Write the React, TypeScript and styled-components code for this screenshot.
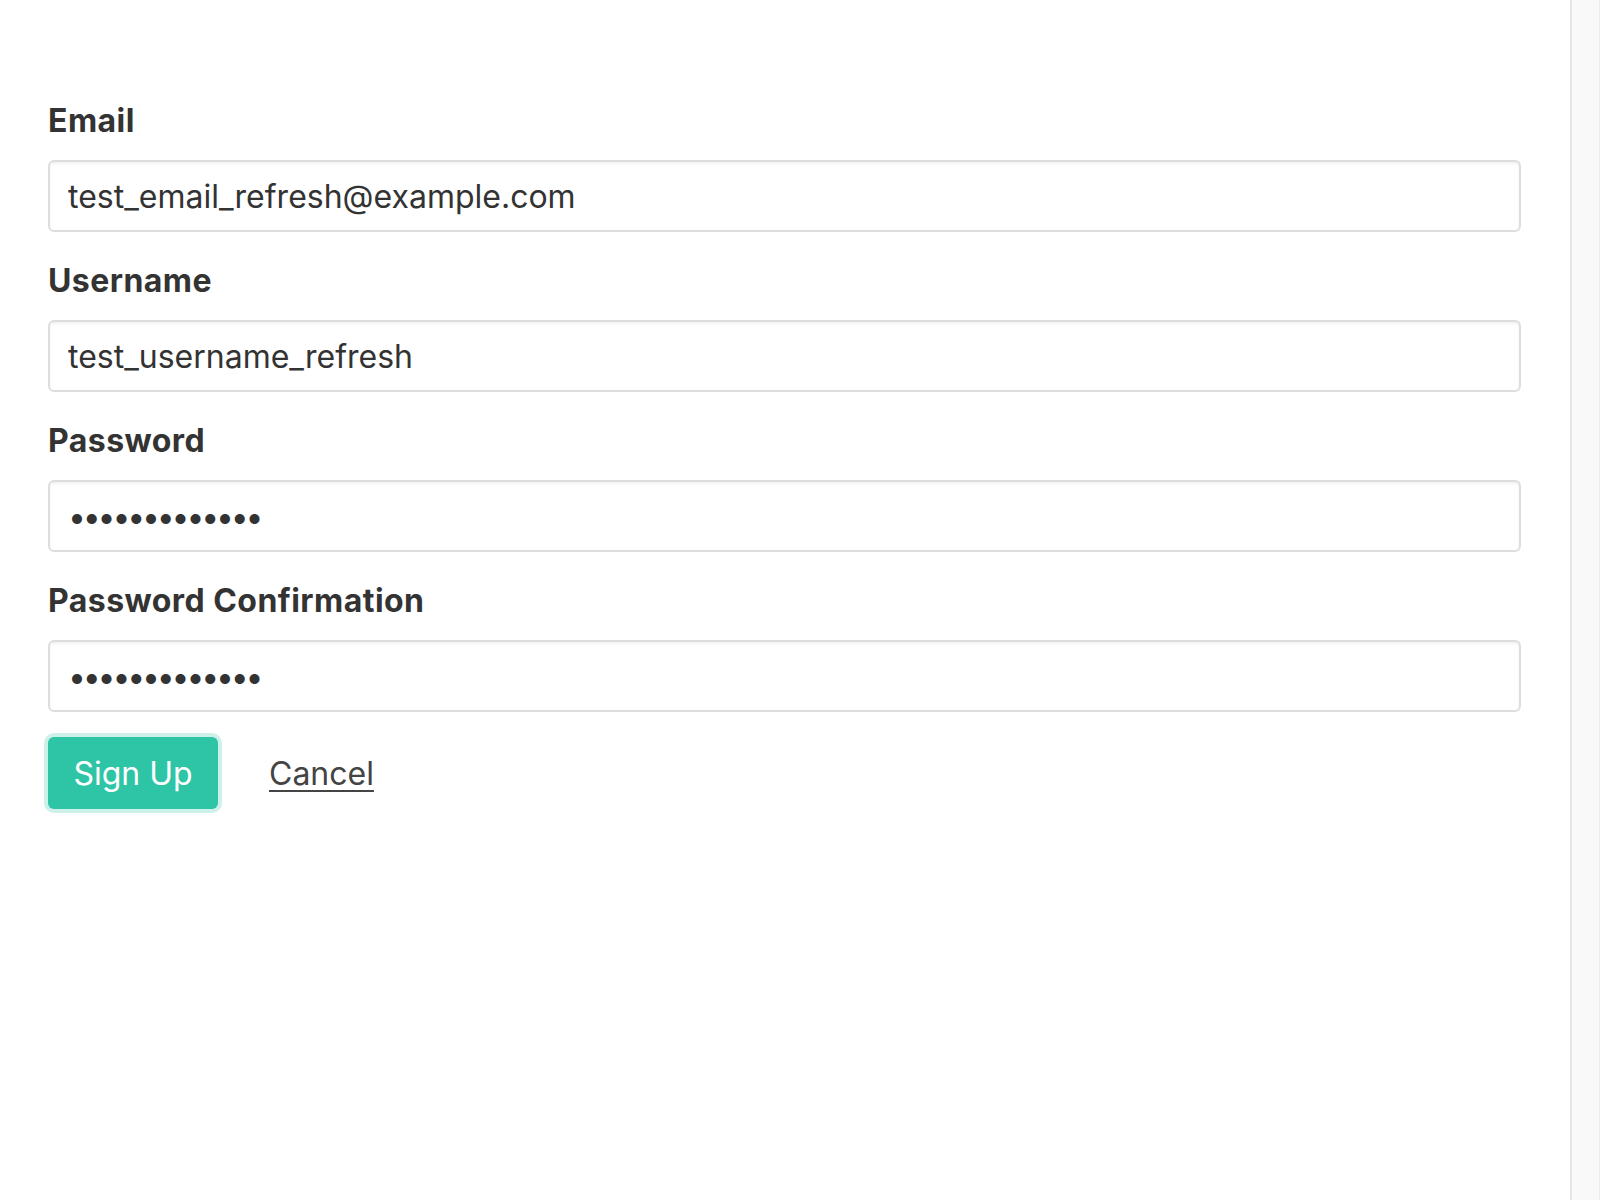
import React from "react";
import styled, { createGlobalStyle } from "styled-components";

const Global = createGlobalStyle`
  html, body { margin: 0; padding: 0; background: #fff; }
  body { font-family: Inter, "Helvetica Neue", Arial, sans-serif; color: #333; }
  * { box-sizing: border-box; }
`;

const Page = styled.div`
  display: flex;
  width: 1600px;
  height: 1200px;
  overflow: hidden;
`;

const Main = styled.main`
  flex: 1;
  padding: 97px 49px 0 48px;
`;

const Track = styled.div`
  width: 30px;
  background: #f9f9f9;
  border-left: 2px solid #e6e6e6;
  border-right: 1px solid #ececec;
`;

const Form = styled.form`
  display: flex;
  flex-direction: column;
`;

const Field = styled.div`
  display: flex;
  flex-direction: column;
  margin-bottom: 25px;
  &:last-of-type { margin-bottom: 23px; }
`;

const Label = styled.label`
  font-size: 32px;
  line-height: 48px;
  font-weight: 700;
  letter-spacing: 0.45px;
  color: #333;
  margin-bottom: 15px;
`;

const Input = styled.input<{ $secret?: boolean }>`
  height: 72px;
  width: 100%;
  border: 2px solid #dddddd;
  border-radius: 6px;
  box-shadow: inset 0 2px 3px rgba(0, 0, 0, 0.05);
  padding: 0 18px;
  font-family: Inter, "Helvetica Neue", Arial, sans-serif;
  font-size: 32px;
  color: #333;
  background: #fff;
  outline: none;
  letter-spacing: ${(p) => (p.$secret ? "-3.2px" : "0")};
`;

const Actions = styled.div`
  display: flex;
  align-items: center;
  gap: 51px;
`;

const Button = styled.button`
  height: 72px;
  width: 170px;
  background: #2ec4a6;
  color: #fff;
  border: none;
  border-radius: 6px;
  box-shadow: 0 0 0 4px #cdf1e8;
  font-family: Inter, "Helvetica Neue", Arial, sans-serif;
  font-size: 32px;
  font-weight: 400;
  padding: 0;
  cursor: pointer;
`;

const CancelLink = styled.a`
  font-size: 32px;
  color: #444;
  text-decoration: underline;
  text-underline-offset: 5px;
  text-decoration-thickness: 2px;
`;

export default function App() {
  return (
    <>
      <Global />
      <Page>
        <Main>
          <Form onSubmit={(e) => e.preventDefault()}>
            <Field>
              <Label htmlFor="email">Email</Label>
              <Input id="email" type="text" defaultValue="test_email_refresh@example.com" />
            </Field>
            <Field>
              <Label htmlFor="username">Username</Label>
              <Input id="username" type="text" defaultValue="test_username_refresh" />
            </Field>
            <Field>
              <Label htmlFor="password">Password</Label>
              <Input id="password" type="password" $secret defaultValue="passwordabcde" />
            </Field>
            <Field>
              <Label htmlFor="confirm">Password Confirmation</Label>
              <Input id="confirm" type="password" $secret defaultValue="passwordabcde" />
            </Field>
            <Actions>
              <Button type="submit">Sign Up</Button>
              <CancelLink href="#">Cancel</CancelLink>
            </Actions>
          </Form>
        </Main>
        <Track />
      </Page>
    </>
  );
}
